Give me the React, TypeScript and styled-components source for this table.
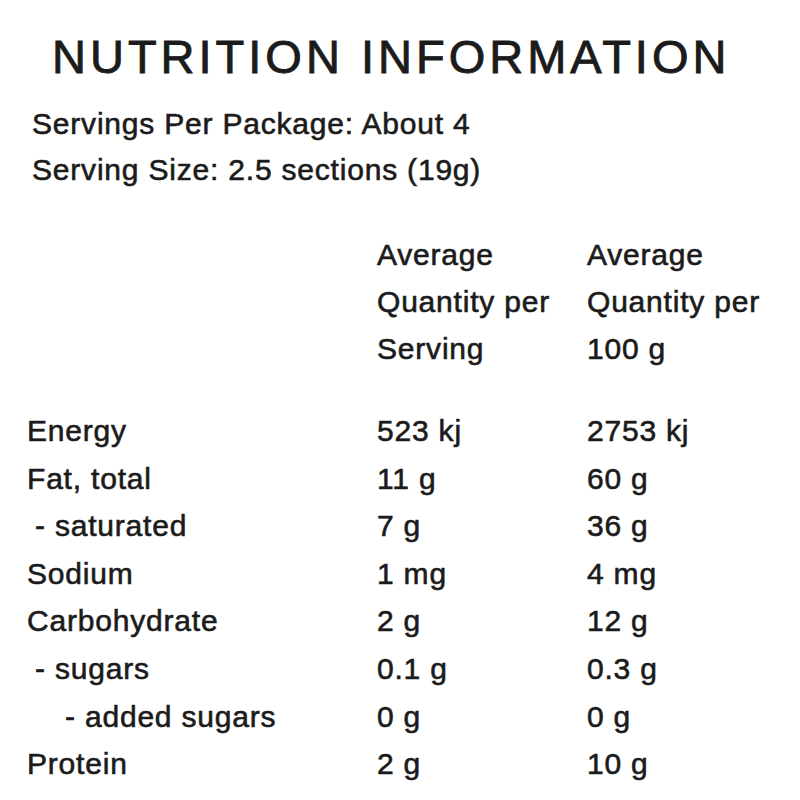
import React from 'react';
import styled, { createGlobalStyle } from 'styled-components';

const GlobalStyle = createGlobalStyle`
  html,
  body {
    margin: 0;
    padding: 0;
    background: #fff;
  }

  body {
    font-family: 'Liberation Sans', Arial, Helvetica, sans-serif;
    color: #1b1b1b;
  }
`;

const LabelWrapper = styled.div`
  box-sizing: border-box;
  width: 800px;
  height: 800px;
  overflow: hidden;
  padding-left: 27px;
  font-size: 30px;
  letter-spacing: 0.8px;
  -webkit-text-stroke: 0.6px #1b1b1b;
`;

const Title = styled.h1`
  margin: 33px 0 0;
  padding-left: 25px;
  height: 47px;
  font-size: 47px;
  font-weight: normal;
  line-height: 47px;
  letter-spacing: 4px;
  white-space: nowrap;
  -webkit-text-stroke: 0.9px #1b1b1b;
`;

const ServingInfo = styled.div`
  margin-top: 21px;
  padding-left: 5px;
  line-height: 46px;
`;

const Columns = styled.div<{ $lineHeight: number }>`
  display: grid;
  grid-template-columns: 350px 210px 1fr;
  line-height: ${(p) => p.$lineHeight}px;
  white-space: nowrap;
`;

const HeaderBlock = styled(Columns)`
  margin-top: 38px;
`;

const TableBody = styled.div`
  margin-top: 35px;
`;

const Cell = styled.div``;

const NutrientName = styled.div<{ $indent: number }>`
  padding-left: ${(p) => p.$indent}px;
`;

type Nutrient = {
  name: string;
  indent: number;
  perServing: string;
  per100: string;
};

const nutrients: Nutrient[] = [
  { name: 'Energy', indent: 0, perServing: '523 kj', per100: '2753 kj' },
  { name: 'Fat, total', indent: 0, perServing: '11 g', per100: '60 g' },
  { name: '- saturated', indent: 8, perServing: '7 g', per100: '36 g' },
  { name: 'Sodium', indent: 0, perServing: '1 mg', per100: '4 mg' },
  { name: 'Carbohydrate', indent: 0, perServing: '2 g', per100: '12 g' },
  { name: '- sugars', indent: 8, perServing: '0.1 g', per100: '0.3 g' },
  { name: '- added sugars', indent: 38, perServing: '0 g', per100: '0 g' },
  { name: 'Protein', indent: 0, perServing: '2 g', per100: '10 g' },
];

const App = () => {
  return (
    <>
      <GlobalStyle />
      <LabelWrapper>
        <Title>NUTRITION INFORMATION</Title>
        <ServingInfo>
          <div>Servings Per Package: About 4</div>
          <div>Serving Size: 2.5 sections (19g)</div>
        </ServingInfo>
        <HeaderBlock $lineHeight={47}>
          <Cell />
          <Cell>
            Average
            <br />
            Quantity per
            <br />
            Serving
          </Cell>
          <Cell>
            Average
            <br />
            Quantity per
            <br />
            100 g
          </Cell>
        </HeaderBlock>
        <TableBody>
          {nutrients.map((n) => (
            <Columns key={n.name} $lineHeight={47.6}>
              <NutrientName $indent={n.indent}>{n.name}</NutrientName>
              <Cell>{n.perServing}</Cell>
              <Cell>{n.per100}</Cell>
            </Columns>
          ))}
        </TableBody>
      </LabelWrapper>
    </>
  );
};

export default App;
